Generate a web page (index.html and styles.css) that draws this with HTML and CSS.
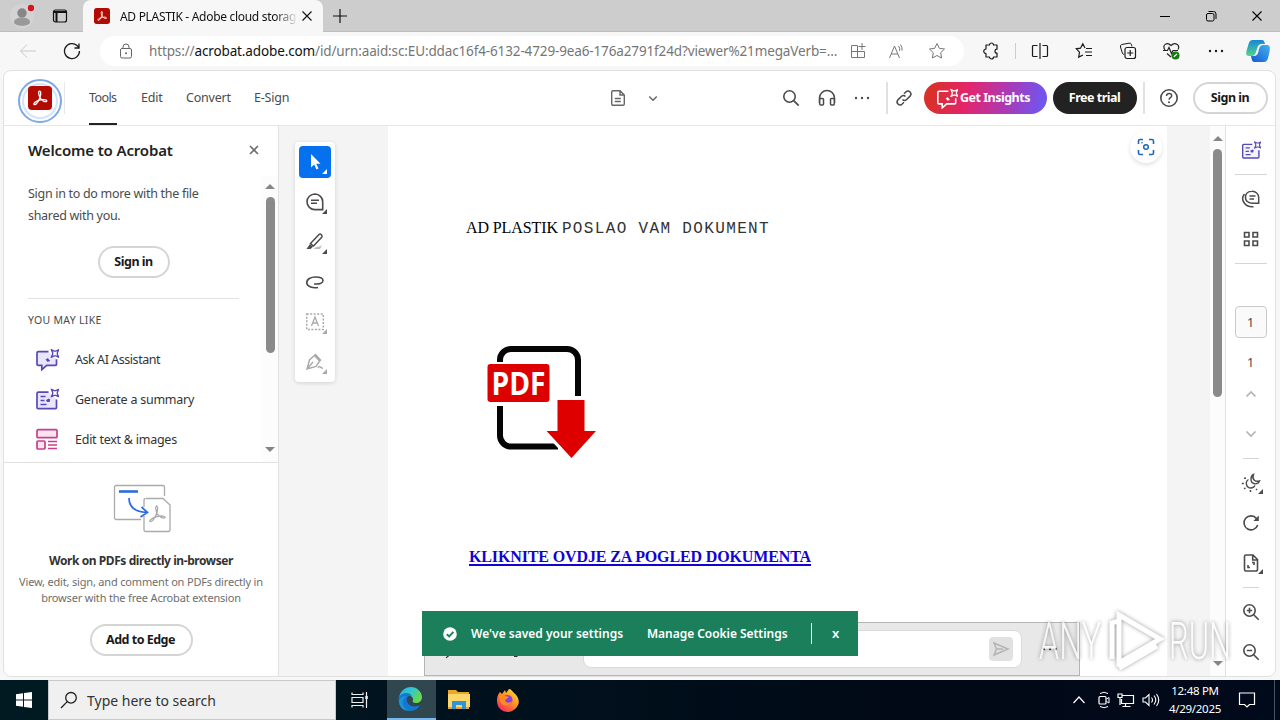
FILE: index.html
```html
<!DOCTYPE html>
<html lang="en">
<head>
  <meta charset="UTF-8" />
  <meta name="viewport" content="width=device-width, initial-scale=1" />
  <title>AD PLASTIK - Adobe cloud storage</title>
  <link rel="stylesheet" href="styles.css">
</head>
<body>

<!-- Shared icons -->
<svg class="defs" width="0" height="0">
  <symbol id="acrobat" viewBox="0 0 24 24">
    <rect width="24" height="24" rx="4" fill="#b30b00"/>
    <path d="M11.300 5.200c1.800-.6 1.700 3.200.8 5.800-.9 2.800-3.400 7.600-5.300 7.600-2 0-.8-2.600 3.200-3.900 2.900-1 8.600-1.700 8.800.1.1 1.700-3.900 1-6.200-2.200C10.900 10.300 10 5.600 11.300 5.200z" fill="none" stroke="#fff" stroke-width="1.3"/>
  </symbol>
  <symbol id="sparkle" viewBox="0 0 10 10">
    <path d="M.8.8L4 2.400h2L9.200.8 7.600 4v2l1.600 3.200L6 7.600H4L.8 9.200 2.400 6V4z" fill="none" stroke="currentColor" stroke-width="1.500"/>
  </symbol>
  <symbol id="ai-chat" viewBox="0 0 24 24">
    <path d="M13.500 4.700H3.200A1.200 1.200 0 0 0 2 5.900v11.300a1.200 1.200 0 0 0 1.200 1.200h3.600v4.300l4.900-4.300h8.600a1.200 1.200 0 0 0 1.200-1.200v-5" fill="var(--fill, none)" stroke="currentColor" stroke-width="1.700"/>
    <path d="M10.500 12.500l2.500-1.500.8 1.600 1.500 1.200-2.500 1.200-1-1z" fill="currentColor"/>
    <use href="#sparkle" x="15.500" y="2" width="9" height="9"/>
  </symbol>
  <symbol id="ai-doc" viewBox="0 0 24 24">
    <path d="M13.500 5.200H3.200A1.200 1.200 0 0 0 2 6.400v14a1.200 1.200 0 0 0 1.200 1.200h17.100a1.200 1.200 0 0 0 1.200-1.200v-8" fill="var(--fill, none)" stroke="currentColor" stroke-width="1.700"/>
    <path d="M5.500 9.500h5M5.500 13.500h4M5.500 17.500h6" stroke="currentColor" stroke-width="1.500"/>
    <path d="M11 13l3-1.500 1.300 1.200L14.500 15 12 15z" fill="currentColor"/>
    <use href="#sparkle" x="15.500" y="1.500" width="9" height="9"/>
  </symbol>
  <symbol id="dots" viewBox="0 0 16 4">
    <circle cx="2" cy="2" r="1.200" fill="currentColor"/><circle cx="8" cy="2" r="1.200" fill="currentColor"/><circle cx="14" cy="2" r="1.200" fill="currentColor"/>
  </symbol>
  <symbol id="cross" viewBox="0 0 12 12"><path d="M1.500 1.500l9 9M10.500 1.500l-9 9" fill="none" stroke="currentColor" stroke-width="1.100"/></symbol>
  <symbol id="corner" viewBox="0 0 5 5"><path d="M5 0v5H0z" fill="currentColor"/></symbol>
  <symbol id="up" viewBox="0 0 12 8"><path d="M1.500 6.500L6 2l4.500 4.500" fill="none" stroke="currentColor" stroke-width="1.700"/></symbol>
  <symbol id="down" viewBox="0 0 12 8"><path d="M1.500 1.500L6 6l4.500-4.500" fill="none" stroke="currentColor" stroke-width="1.700"/></symbol>
  <symbol id="comment" viewBox="0 0 20 20">
    <path d="M10 2a8 7.800 0 1 0 0 15.600h7.700V9.800A7.800 7.800 0 0 0 10 2z" fill="none" stroke="currentColor" stroke-width="1.600"/>
    <path d="M6 8.300h8M6 11.300h6" stroke="currentColor" stroke-width="1.500"/>
  </symbol>
  <symbol id="star" viewBox="0 0 18 18"><path d="M9 1.500l2.300 4.800 5.200.7-3.800 3.700.9 5.300L9 13.500 4.400 16l.9-5.300L1.500 7l5.200-.7z" fill="none" stroke="currentColor" stroke-linejoin="round"/></symbol>
</svg>

<!-- Browser tab strip -->
<div class="tabstrip">
  <div class="profile">
    <svg width="24" height="24" viewBox="0 0 24 24"><circle cx="12" cy="12" r="12" fill="#d3d3d3"/><circle cx="12" cy="9" r="4.700" fill="#878787"/><path d="M4 18c0-6 16-6 16 0 0 5-16 5-16 0z" fill="#999"/><circle cx="21" cy="4" r="3.200" fill="#d8141a"/></svg>
  </div>
  <div class="tab-menu">
    <svg width="16" height="16" viewBox="0 0 16 16"><rect x="1.500" y="2" width="13" height="12" rx="2" fill="none" stroke="#111" stroke-width="1.200"/><path d="M2 4h12M4.500 5v9" stroke="#111" stroke-width="2"/></svg>
  </div>
  <div class="tab">
    <svg width="16" height="16"><use href="#acrobat"/></svg>
    <span class="tab-title">AD PLASTIK - Adobe cloud storag</span>
    <svg class="tab-close" width="12" height="12"><use href="#cross"/></svg>
  </div>
  <div class="new-tab"><svg width="14" height="14" viewBox="0 0 14 14"><path d="M7 0v14M0 7h14" stroke="#111" stroke-width="1.200"/></svg></div>
  <div class="win-buttons">
    <span><svg width="12" height="12" viewBox="0 0 12 12"><path d="M1 6.500h10" stroke="#000"/></svg></span>
    <span><svg width="12" height="12" viewBox="0 0 12 12"><rect x="1.500" y="3.500" width="7.500" height="7.500" rx="1.500" fill="none" stroke="#000"/><path d="M3.500 1.500h5a2.500 2.500 0 0 1 2.500 2.500v5" fill="none" stroke="#000"/></svg></span>
    <span><svg width="12" height="12"><use href="#cross"/></svg></span>
  </div>
</div>

<!-- Address bar -->
<div class="toolbar">
  <div class="nav-btn back"><svg width="18" height="16" viewBox="0 0 18 16"><path d="M17 8H1.500M8 1.500L1.500 8 8 14.500" fill="none" stroke="currentColor"/></svg></div>
  <div class="nav-btn"><svg width="18" height="18" viewBox="0 0 18 18"><path d="M16.500 9A7.500 7.500 0 1 1 14 3.500L16 5.500M16 1.500v4.500h-4.500" fill="none" stroke="currentColor" stroke-width="1.300"/></svg></div>
  <div class="address">
    <svg class="lock" width="14" height="16" viewBox="0 0 14 16"><rect x="1.500" y="5.500" width="11" height="9.500" rx="1.500" fill="none" stroke="#666"/><path d="M4 5V4a3 3 0 0 1 6 0v1" fill="none" stroke="#666"/><circle cx="7" cy="10.200" r="1" fill="#666"/></svg>
    <span class="url">https://<b>acrobat.adobe.com</b>/id/urn:aaid:sc:EU:ddac16f4-6132-4729-9ea6-176a2791f24d?viewer%21megaVerb=…</span>
    <div class="address-icons">
      <svg width="16" height="16" viewBox="0 0 16 16"><path d="M1.500 2.500h6v12h-6zM1.500 8.500h13M7.500 8.500v6h7v-6M12 0v7M8.500 3.500h7" fill="none" stroke="currentColor"/></svg>
      <svg width="18" height="16" viewBox="0 0 18 16"><path d="M1.500 15L6.500 3l5 12M3.200 11h6.600M10.500 3a5 5 0 0 1 1 5M12.500 1.500a8 8 0 0 1 1.500 6" fill="none" stroke="currentColor"/></svg>
      <svg width="18" height="18"><use href="#star"/></svg>
    </div>
  </div>
  <div class="browser-actions">
    <span><svg width="18" height="18" viewBox="0 0 18 18"><path d="M4 3h3.500a2 2 0 1 1 4 0H15v4.200a1.500 1.500 0 0 0 0 4V15h-3.500a2 2 0 1 1-4 0H4v-3.500a2.200 2.200 0 1 1 0-4.500z" fill="none" stroke="currentColor" stroke-width="1.200" stroke-linejoin="round"/></svg></span>
    <i class="divider"></i>
    <span><svg width="18" height="18" viewBox="0 0 18 18"><path d="M6.500 3.500h-4a1 1 0 0 0-1 1v9a1 1 0 0 0 1 1h4M11.500 3.500h4a1 1 0 0 1 1 1v9a1 1 0 0 1-1 1h-4M9 1v16" fill="none" stroke="currentColor" stroke-width="1.200"/></svg></span>
    <span><svg width="18" height="18" viewBox="0 0 18 18"><path d="M10 6L7.800 1.800 5.500 6.200l-4.200.6 3.200 3.300-.8 5L8 13M11 6.500h6M10 10h7M11 13.500h6" fill="none" stroke="currentColor" stroke-width="1.200"/></svg></span>
    <span><svg width="18" height="18" viewBox="0 0 18 18"><path d="M5 12.500l-1.500-1L1.500 5a2 2 0 0 1 1.300-2.500L10 1.200a2 2 0 0 1 2.500 1.500l.4 1.800" fill="none" stroke="currentColor"/><rect x="6" y="5.500" width="10.500" height="11" rx="2" fill="none" stroke="currentColor" stroke-width="1.200"/><path d="M11.200 8v6M8.200 11h6" stroke="currentColor" stroke-width="1.200"/></svg></span>
    <span><svg width="20" height="18" viewBox="0 0 20 18"><path d="M3 8C-.5 3 5-.5 9 3.500c4-4 9.500-.5 7 4M5 11.500L9 15M1 8.500h4.500L7 5.500l2.500 6L11 8.500h5" fill="none" stroke="#222" stroke-width="1.200"/><circle cx="13.500" cy="13.500" r="4" fill="#107c10"/><path d="M11.800 14.700l3.400-2.800" stroke="#fff" stroke-width="1.200"/></svg></span>
    <span><svg width="16" height="4"><use href="#dots"/></svg></span>
    <span class="copilot"><svg width="26" height="24" viewBox="0 0 26 24">
      <defs><linearGradient id="cp1" x1="0" y1="0" x2="0" y2="1"><stop offset="0" stop-color="#1785d8"/><stop offset="1" stop-color="#52d58b"/></linearGradient><linearGradient id="cp2" x1="0" y1="1" x2="1" y2="0"><stop offset="0" stop-color="#1757d5"/><stop offset="1" stop-color="#40b5ee"/></linearGradient></defs>
      <path d="M8 1h9c2 0 2 1 3 4h-3c-4 0-4 2-6 8-1 3-2 4-4 4H4c-4 0-3-4-1-10 1-4 2-6 5-6z" fill="url(#cp1)"/><path d="M19 23h-9c-3 0-3-2-4-6h3c3 0 4-2 5-7 1-3 2-4 4-4h4c4 0 3 5 2 9-1 5-2 8-5 8z" fill="url(#cp2)"/></svg></span>
  </div>
</div>

<!-- Acrobat web app -->
<div class="app">
  <header class="app-header">
    <div class="logo"><svg width="24" height="24"><use href="#acrobat"/></svg><i class="pulse"></i></div>
    <nav class="menu">
      <a class="active">Tools</a><a class="edit">Edit</a><a class="convert">Convert</a><a class="esign">E-Sign</a>
    </nav>
    <div class="doc-switch">
      <svg width="16" height="18" viewBox="0 0 16 18"><path d="M10 1.700H3A1.300 1.300 0 0 0 1.700 3v12A1.300 1.300 0 0 0 3 16.300h10a1.300 1.300 0 0 0 1.300-1.300V6zM10 2v4h4M4.800 9.500h6M4.800 12.500h6" fill="none" stroke="currentColor" stroke-width="1.400"/></svg>
      <svg width="10" height="7"><use href="#down"/></svg>
    </div>
    <div class="header-icons">
      <svg width="18" height="18" viewBox="0 0 18 18"><circle cx="7.500" cy="7.500" r="5.700" fill="none" stroke="currentColor" stroke-width="1.600"/><path d="M11.700 11.700l5 5" stroke="currentColor" stroke-width="1.700"/></svg>
      <svg width="18" height="18" viewBox="0 0 18 18"><path d="M1.500 14V9a7.500 7.500 0 0 1 15 0v5" fill="none" stroke="currentColor" stroke-width="1.600"/><rect x="1.700" y="9.500" width="3.800" height="6.500" rx="1" fill="#fff" stroke="currentColor" stroke-width="1.500"/><rect x="12.500" y="9.500" width="3.800" height="6.500" rx="1" fill="#fff" stroke="currentColor" stroke-width="1.500"/></svg>
      <svg width="16" height="18" viewBox="0 -7 16 18"><use href="#dots" width="16" height="4"/></svg>
    </div>
    <i class="divider"></i>
    <svg class="link" width="18" height="18" viewBox="0 0 18 18"><path d="M7.500 10.500a3 3 0 0 0 4.200 0l3.600-3.600a3 3 0 0 0-4.200-4.200L9 4.800M10.500 7.500a3 3 0 0 0-4.200 0l-3.600 3.600a3 3 0 0 0 4.200 4.200L9 13.200" fill="none" stroke="currentColor" stroke-width="1.500"/></svg>
    <button class="btn insights"><svg width="22" height="22"><use href="#ai-chat"/></svg><span>Get Insights</span></button>
    <button class="btn trial"><span>Free trial</span></button>
    <i class="divider"></i>
    <svg class="help" width="20" height="20" viewBox="0 0 20 20"><circle cx="10" cy="10" r="8.200" fill="none" stroke="currentColor" stroke-width="1.600"/><path d="M7.500 8c0-3.500 5.200-3 5.200-.3 0 1.900-2.600 2-2.600 4" fill="none" stroke="currentColor" stroke-width="1.500"/><circle cx="10" cy="14.300" r="1" fill="currentColor"/></svg>
    <button class="btn outline signin-top"><span>Sign in</span></button>
  </header>

  <div class="app-body">
    <!-- Left panel -->
    <aside class="side">
      <div class="side-title"><h2>Welcome to Acrobat</h2><svg width="10" height="10" viewBox="0 0 10 10"><path d="M1 1l8 8M9 1L1 9" stroke="#6e6e6e" stroke-width="1.600"/></svg></div>
      <div class="side-scroll">
        <div class="side-content">
          <p class="intro">Sign in to do more with the file<br>shared with you.</p>
          <button class="btn outline signin-side"><span>Sign in</span></button>
          <hr>
          <h3>YOU MAY LIKE</h3>
          <ul class="suggestions">
            <li><svg class="violet" width="24" height="24"><use href="#ai-chat"/></svg><span class="ask">Ask AI Assistant</span></li>
            <li><svg class="violet" width="24" height="24"><use href="#ai-doc"/></svg><span>Generate a summary</span></li>
            <li><svg class="pink" width="24" height="24" viewBox="0 0 24 24"><rect x="2" y="2.700" width="20" height="8" rx="1" fill="#fbe3f0" stroke="currentColor" stroke-width="1.700"/><rect x="2" y="14" width="8" height="8" rx="1" fill="#fbe3f0" stroke="currentColor" stroke-width="1.700"/><path d="M13 14.500h9M13 18h9M13 21.500h9" stroke="currentColor" stroke-width="1.700"/></svg><span>Edit text &amp; images</span></li>
          </ul>
        </div>
        <div class="scrollbar"><i class="arrow-up"></i><i class="thumb"></i><i class="arrow-down"></i></div>
      </div>
      <div class="promo">
        <svg width="60" height="50" viewBox="0 0 60 50"><path d="M29 36.500H4A1.500 1.500 0 0 1 2.500 35V4A1.500 1.500 0 0 1 4 2.500h47A1.500 1.500 0 0 1 52.500 4v9M34 15.500h17l7 6.500v25a1.500 1.500 0 0 1-1.500 1.500h-23A1.500 1.500 0 0 1 32 47V33M32 24v-7a1.500 1.500 0 0 1 1.500-1.500" fill="none" stroke="#aaa" stroke-width="1.300"/><path d="M7 8.500h19" stroke="#2c6be0" stroke-width="2.600"/><path d="M17 15c0 9 5 14 18 14.500M29.500 24l6 5.500-7 4.500" fill="none" stroke="#2c6be0" stroke-width="1.700"/><path d="M44.500 23c2 0 1 7-1 10-1.500 3-4 6-5.500 5.500-1-1 3-4 7-5 4-.9 8-.7 8 1-1 2-6-1-8-4-1-3-2-7-.5-7.500z" fill="none" stroke="#aaa" stroke-width="1.300"/></svg>
        <h4>Work on PDFs directly in-browser</h4>
        <p><span>View, edit, sign, and comment on PDFs directly in</span><br><span>browser with the free Acrobat extension</span></p>
        <button class="btn outline add-edge"><span>Add to Edge</span></button>
      </div>
    </aside>

    <!-- Document viewer -->
    <main class="viewer">
      <div class="palette">
        <div class="tool selected"><svg width="20" height="20" viewBox="0 0 20 20"><path d="M6 2v13.500l3.200-3 2.300 5 2-1-2.200-4.800H15.500z" fill="#fff"/></svg><svg class="corner" width="5" height="5"><use href="#corner"/></svg></div>
        <div class="tool"><svg width="20" height="20"><use href="#comment"/></svg><svg class="corner" width="5" height="5"><use href="#corner"/></svg></div>
        <div class="tool"><svg width="20" height="20" viewBox="0 0 20 20"><path d="M5.500 11.500L14 2.600a1.500 1.500 0 0 1 2.200 0l.5.600a1.500 1.500 0 0 1 0 2L8.500 14z" fill="none" stroke="currentColor" stroke-width="1.500"/><path d="M5 12l3 2.700L5.500 17H1.500z" fill="currentColor"/><path d="M9 17c2-3 4-1 8-4l-2 4z" fill="#bbb"/></svg><svg class="corner" width="5" height="5"><use href="#corner"/></svg></div>
        <div class="tool"><svg width="20" height="20" viewBox="0 0 20 20"><path d="M13 15.500c-5 .8-11-.8-11.200-4.500C1.500 7 6 5 10.500 5c4 0 7.500 1.200 7.500 3.600 0 2.300-3.500 3.400-6.500 3.400H9" fill="none" stroke="currentColor" stroke-width="1.600"/></svg></div>
        <div class="tool off"><svg width="20" height="20" viewBox="0 0 20 20"><rect x="1.700" y="2" width="16.600" height="15.500" fill="none" stroke="currentColor" stroke-width="1.500" stroke-dasharray="2 1.500"/><path d="M6.500 14L10 5l3.500 9M7.800 11h4.400" fill="none" stroke="currentColor" stroke-width="1.300"/></svg><svg class="corner" width="5" height="5"><use href="#corner"/></svg></div>
        <div class="tool off"><svg width="20" height="20" viewBox="0 0 20 20"><path d="M2 17L4.500 8 10.500 2.500l5 5.500L11 14.500zM2 17l6-7M9.500 3.500l5 5.500M13 16c2-4 2 1 5 0" fill="none" stroke="currentColor" stroke-width="1.400"/></svg><svg class="corner" width="5" height="5"><use href="#corner"/></svg></div>
      </div>
      <article class="sheet">
        <p class="sent"><span class="company">AD PLASTIK</span> <code>POSLAO VAM DOKUMENT</code></p>
        <svg class="pdf-icon" width="114" height="116" viewBox="0 0 114 116">
          <path d="M14 18V16A11 11 0 0 1 25 5H81A11 11 0 0 1 92 16V52M14 62V91A11 11 0 0 0 25 102.500H72" fill="none" stroke="#050505" stroke-width="6"/>
          <rect x="1.500" y="20" width="62" height="38" rx="3" fill="#de0000"/>
          <text x="5.500" y="50.500" textLength="54" lengthAdjust="spacingAndGlyphs" class="pdf-label">PDF</text>
          <path d="M71.500 56h27v31h11.500L85.500 114 60.500 87h11z" fill="#de0000"/>
          <path d="M57 86l18 19" stroke="#fff" stroke-width="3"/>
        </svg>
        <a class="doc-link">KLIKNITE OVDJE ZA POGLED DOKUMENTA</a>
      </article>
      <div class="capture"><svg width="18" height="18" viewBox="0 0 18 18"><path d="M1.500 6V3A1.500 1.500 0 0 1 3 1.500h3M12 1.500h3A1.500 1.500 0 0 1 16.500 3v3M16.500 12v3a1.500 1.500 0 0 1-1.500 1.500h-3M6 16.500H3A1.500 1.500 0 0 1 1.500 15v-3" fill="none" stroke="#2468b4" stroke-width="1.600"/><circle cx="9" cy="9" r="2.300" fill="none" stroke="#2468b4" stroke-width="1.500"/><circle cx="5" cy="4.800" r=".8" fill="#2468b4"/></svg></div>
    </main>
    <div class="scrollbar page-scroll"><i class="arrow-up"></i><i class="thumb"></i><i class="arrow-down"></i></div>

    <!-- Right rail -->
    <aside class="rail">
      <div class="cell"><svg class="violet plain" width="20" height="20"><use href="#ai-doc"/></svg></div>
      <hr>
      <div class="cell comments"><svg width="20" height="20" viewBox="0 0 20 20"><path d="M11 2.200c-8.500 0-9 12 0 12h6.700V8.500A6.400 6.400 0 0 0 11 2.200zM8.500 6.900h6M8.500 9.900h4.500" fill="none" stroke="currentColor" stroke-width="1.500"/><path d="M3.500 5c-4.500 5 0 13.500 9 12.700" fill="none" stroke="currentColor" stroke-width="1.500"/></svg></div>
      <div class="cell"><svg width="16" height="16" viewBox="0 0 16 16"><path d="M1.500 1.500h4.500V6H1.500zM10 1.500h4.500V6H10zM1.500 10h4.500v4.500H1.500zM10 10h4.500v4.500H10z" fill="none" stroke="currentColor" stroke-width="1.600"/></svg></div>
      <hr>
      <div class="page-box">1</div>
      <div class="page-count">1</div>
      <div class="cell small muted"><svg width="12" height="8"><use href="#up"/></svg></div>
      <div class="cell muted"><svg width="12" height="8"><use href="#down"/></svg></div>
      <hr class="short">
      <div class="cell night"><svg width="20" height="20" viewBox="0 0 20 20"><path d="M12.500 1.500c-2 4.500 1.500 7.800 6 6.500-2 4.500-8.500 3.500-8.500-1.700 0-2.300 1-4.200 2.500-4.800z" fill="none" stroke="currentColor" stroke-width="1.400"/><path d="M7.500 6.500C3.500 9 5.500 15 9.800 15c2 0 3.300-.8 4.200-2.500" fill="none" stroke="currentColor" stroke-width="1.400"/><path d="M3 5.300h2M.8 10.500h2M3.200 16l1.200-1.200M9.500 19v-2M15 16l1 1" stroke="currentColor" stroke-width="1.500"/></svg><svg class="corner" width="5" height="5"><use href="#corner"/></svg></div>
      <div class="cell"><svg width="18" height="18" viewBox="0 0 18 18"><path d="M15.700 11A7 7 0 1 1 14.500 4.500" fill="none" stroke="currentColor" stroke-width="1.600"/><path d="M16.800 1.500V7h-5.500z" fill="currentColor"/></svg></div>
      <div class="cell"><svg width="18" height="20" viewBox="0 0 18 20"><path d="M11 2H4a1.500 1.500 0 0 0-1.500 1.500v13A1.500 1.500 0 0 0 4 18h10a1.500 1.500 0 0 0 1.500-1.500V6.500zM10.700 2v5h5M10 9.500h2V12M8 14.500H6V12" fill="none" stroke="currentColor" stroke-width="1.600"/></svg><svg class="corner" width="5" height="5"><use href="#corner"/></svg></div>
      <hr class="short">
      <div class="cell zoom"><svg width="18" height="18" viewBox="0 0 18 18"><circle cx="7.500" cy="7.500" r="5.700" fill="none" stroke="currentColor" stroke-width="1.600"/><path d="M11.700 11.700l5 5M7.500 4.800v5.400M4.800 7.500h5.400" stroke="currentColor" stroke-width="1.600"/></svg></div>
      <div class="cell"><svg width="18" height="18" viewBox="0 0 18 18"><circle cx="7.500" cy="7.500" r="5.700" fill="none" stroke="currentColor" stroke-width="1.600"/><path d="M11.700 11.700l5 5M4.800 7.500h5.400" stroke="currentColor" stroke-width="1.600"/></svg></div>
    </aside>
  </div>

  <!-- Assistant bar pinned to the bottom of the viewer -->
  <div class="assistant">
    <svg class="marks" width="100" height="4" viewBox="0 0 100 4"><path d="M1 1.800l2.500-1.800M69 .5h3.500" stroke="#333" stroke-width="1.200"/></svg>
    <div class="ask-box"><span class="send"><svg width="18" height="16" viewBox="0 0 18 16"><path d="M2 2l14 6-14 6 2.500-6zM4.500 8H11" fill="none" stroke="#b4b4b4" stroke-width="1.500"/></svg></span></div>
    <svg class="more" width="16" height="4"><use href="#dots"/></svg>
  </div>

  <!-- Cookie toast -->
  <div class="toast">
    <svg width="14" height="14" viewBox="0 0 14 14"><circle cx="7" cy="7" r="6.800" fill="#fff"/><path d="M3.800 7.200L6.200 9.500l4.200-4.600" fill="none" stroke="#1b7f5c" stroke-width="1.900"/></svg>
    <span class="saved">We've saved your settings</span>
    <span class="manage">Manage Cookie Settings</span>
    <i></i>
    <span class="dismiss">x</span>
  </div>
</div>

<svg class="watermark" width="220" height="80" viewBox="-4 -8 220 80">
  <text x="4" y="51" textLength="62" lengthAdjust="spacingAndGlyphs">ANY</text>
  <path class="play" d="M84 7l41 24-41 24zM77 51V15l6-2M84 60l38-22"/>
  <text x="134" y="51" textLength="62" lengthAdjust="spacingAndGlyphs">RUN</text>
</svg>

<!-- Windows taskbar -->
<footer class="taskbar">
  <div class="start"><svg width="16" height="16" viewBox="0 0 16 16"><path d="M0 2.300L7 1.300v6.300H0zM8 1.100L16 0v7.600H8zM0 8.500h7v6.300l-7-1zM8 8.500h8V16l-8-1.100z" fill="#fff"/></svg></div>
  <div class="search"><svg width="18" height="18" viewBox="0 0 18 18"><circle cx="11" cy="6.800" r="5.300" fill="none" stroke="#222" stroke-width="1.300"/><path d="M7.200 10.600L1 17" stroke="#222" stroke-width="1.300"/></svg><span>Type here to search</span></div>
  <div class="task"><svg width="18" height="18" viewBox="0 0 18 18"><path d="M1 1.500v2h11v-2M1 16.500v-2h11v2M1 6.500h11v5H1zM15.500 1v16" fill="none" stroke="#eee" stroke-width="1.200"/><path d="M14.300 5h2.500v3h-2.500z" fill="#eee"/></svg></div>
  <div class="task open"><svg width="24" height="24" viewBox="0 0 24 24">
    <defs><linearGradient id="eg" x1="0" y1="0" x2="1" y2=".5"><stop offset="0" stop-color="#2ab2e8"/><stop offset=".5" stop-color="#31c6d0"/><stop offset="1" stop-color="#68d84c"/></linearGradient></defs>
    <path d="M1 11C2 4 7 0 13 0c6 0 11 5 11 10 0 4-3 6-6 6s-4-1-3-3c1-4-7-8-14-2z" fill="url(#eg)"/><path d="M1 10c3-5 11-5 13-1-4-1-6 2-5 5 1 5 7 7 13 4-3 6-11 8-17 4-4-3-5-8-4-12z" fill="#1378cf"/><path d="M9 9.500c-6 2-6 10 1 14-6 0-9-5-9-10 1-3 4-5 8-4z" fill="#1c94dc"/></svg></div>
  <div class="task"><svg width="24" height="22" viewBox="0 0 24 22"><path d="M1 1h8l2 2h11v17H1z" fill="#e9a72b"/><path d="M1 5h22v13H1z" fill="#ffd768"/><path d="M5 20v-8h14v8h-4v-4H9v4z" fill="#3193d8"/></svg></div>
  <div class="task"><svg width="24" height="24" viewBox="0 0 24 24">
    <defs><linearGradient id="ff" x1="1" y1="0" x2=".2" y2="1"><stop offset="0" stop-color="#fff044"/><stop offset=".45" stop-color="#ff9a1f"/><stop offset="1" stop-color="#f5275e"/></linearGradient></defs>
    <path d="M4 4l2 2 3-4 1 3 3-4c2 0 3 2 5 4 4 3 6 8 4 12-4 9-16 9-20 1C0 13 1 7 4 4z" fill="url(#ff)"/><circle cx="11.500" cy="12" r="5" fill="#8c3fe0"/><path d="M3 8c4-2 7 0 10 1l-4 3c1 4 5 3 7 1-1 6-10 6-12 0z" fill="#ff8a24"/></svg></div>
  <div class="tray">
    <svg width="14" height="10" viewBox="0 0 14 10"><path d="M1.500 8L7 2l5.500 6" fill="none" stroke="#fff" stroke-width="1.200"/></svg>
    <svg width="12" height="18" viewBox="0 0 12 18"><rect x="1" y="5.500" width="7" height="7.500" rx="1" fill="none" stroke="#fff" stroke-width="1.200"/><path d="M8.500 8l2.500-1.500v5.500L8.500 10.500M2 2.500q4-2.500 8 0M2 15.500q4 2.500 8 0" fill="none" stroke="#fff"/></svg>
    <svg width="18" height="16" viewBox="0 0 18 16"><path d="M5 3.500h11.500v8H4.500V7M8.500 12v2.500M5.500 14.500h8M1 2h4v3.500H1zM3 5.500V13" fill="none" stroke="#fff" stroke-width="1.200"/></svg>
    <svg width="18" height="16" viewBox="0 0 18 16"><path d="M1 6h2.500L7 2.500v11L3.500 10H1zM9.500 5.500q2 2.500 0 5M12 3.500q3.500 4.500 0 9M14.500 2q4.500 6 0 12" fill="none" stroke="#fff" stroke-width="1.100"/></svg>
    <div class="clock"><span>12:48 PM</span><span>4/29/2025</span></div>
    <svg class="notif" width="18" height="18" viewBox="0 0 18 18"><path d="M1.500 2h15v11.500h-5L9 16l-2.500-2.500h-5z" fill="none" stroke="#fff" stroke-width="1.200"/></svg>
    <i class="peek"></i>
  </div>
</footer>

</body>
</html>
```
FILE: styles.css
```css
* {
  box-sizing: border-box;
}
body {
  margin: 0;
  width: 1280px;
  height: 720px;
  overflow: hidden;
  position: relative;
  display: flex;
  flex-direction: column;
  background: #f7f7f7;
  font-family: "Noto Sans", "Open Sans", sans-serif;
  font-size: 12.5px;
  color: #333;
}
svg {
  display: block;
  flex: none;
}
.defs {
  position: absolute;
}
span,
a {
  white-space: nowrap;
}

/* Tab strip */
.tabstrip {
  height: 32px;
  flex: none;
  display: flex;
  align-items: center;
  background: #cdcdcd;
  box-shadow: inset 0 -1px 0 #bdbdbd;
}
.profile {
  width: 44px;
  padding-left: 10px;
}
.tab-menu {
  width: 39px;
  padding-left: 8px;
}
.tab {
  width: 240px;
  height: 32px;
  padding: 0 10px 0 11px;
  display: flex;
  align-items: center;
  background: #f7f7f7;
  border-radius: 8px 8px 0 0;
  color: #111;
}
.tab-title {
  width: 176px;
  margin-left: 10px;
  font-size: 12px;
  letter-spacing: -0.3px;
  -webkit-mask-image: linear-gradient(90deg, #000 155px, transparent 178px);
  mask-image: linear-gradient(90deg, #000 155px, transparent 178px);
}
.tab-close {
  margin-left: 5px;
}
.new-tab {
  margin-left: 10px;
}
.win-buttons {
  display: flex;
  margin-left: auto;
  color: #000;
}
.win-buttons span {
  width: 46px;
  display: flex;
  justify-content: center;
}

/* Address bar */
.toolbar {
  height: 38px;
  flex: none;
  display: flex;
  align-items: center;
  color: #1b1b1b;
}
.nav-btn {
  width: 44px;
  flex: none;
  display: flex;
  justify-content: center;
}
.back {
  margin-left: 6px;
  color: #c9c9c9;
}
.address {
  width: 864px;
  flex: none;
  height: 30px;
  margin-left: 6px;
  padding: 0 16px 0 19px;
  display: flex;
  align-items: center;
  background: #fff;
  border-radius: 15px;
  color: #767676;
}
.url {
  width: 701px;
  flex: none;
  margin-left: 16px;
  font-size: 13.5px;
  letter-spacing: -0.13px;
}
.url b {
  font-weight: 400;
  color: #111;
}
.address-icons {
  display: flex;
  align-items: center;
  gap: 22px;
}
.browser-actions {
  flex: none;
  display: flex;
  align-items: center;
  margin-left: 5px;
}
.browser-actions span {
  width: 44px;
  flex: none;
  display: flex;
  justify-content: center;
}
.browser-actions .divider {
  width: 1px;
  height: 16px;
  margin: 0 2px;
  background: #ccc;
}
.browser-actions .copilot {
  width: 39px;
}

/* App frame */
.app {
  width: 1273px;
  height: 607px;
  margin-left: 3px;
  flex: none;
  position: relative;
  display: flex;
  flex-direction: column;
  overflow: hidden;
  background: #fff;
  border: 1px solid #e1e1e1;
  border-radius: 8px;
}
.app-header {
  height: 55px;
  flex: none;
  display: flex;
  align-items: center;
  border-bottom: 1px solid #e6e6e6;
  color: #4b4b4b;
}
.logo {
  width: 61px;
  height: 32px;
  padding: 4px 0 0 24px;
  position: relative;
  border-right: 1px solid #e8e8e8;
}
.pulse {
  position: absolute;
  left: 14px;
  top: -3px;
  width: 44px;
  height: 44px;
  border: 2px solid #7ea8e6;
  border-radius: 50%;
  box-shadow: inset 0 0 0 2px #fff, inset 0 0 0 4px #d3e4fa;
}
.logo svg {
  position: relative;
  z-index: 1;
}
.menu {
  width: 523px;
  height: 54px;
  padding-left: 24px;
  display: flex;
}
.menu a {
  padding-top: 18px;
  height: 54px;
  letter-spacing: -0.2px;
}
.menu .active {
  width: 28px;
  letter-spacing: -0.6px;
  border-bottom: 2px solid #222;
}
.menu .edit {
  width: 45px;
  margin-left: 24px;
}
.menu .convert {
  width: 68px;
}
.doc-switch {
  display: flex;
  align-items: center;
  gap: 22px;
  width: 170px;
  padding-left: 22px;
  color: #666;
}
.header-icons {
  display: flex;
  gap: 18px;
  margin-left: 24px;
}
.app-header .divider {
  width: 2px;
  height: 32px;
  background: #e1e1e1;
}
.header-icons + .divider {
  margin-left: 16px;
}
.link {
  margin: 0 11px 0 7px;
}
.btn {
  height: 32px;
  flex: none;
  padding: 0 1px 2px 0;
  display: flex;
  align-items: center;
  justify-content: center;
  border: none;
  border-radius: 16px;
  font-family: inherit;
  font-size: 12.5px;
  font-weight: 700;
  letter-spacing: -0.5px;
}
.insights {
  width: 123px;
  padding-right: 5px;
  color: #fff;
  background: linear-gradient(100deg, #d9302c 8%, #e3256b 35%, #a83bb8 68%, #7155ee 95%);
}
.insights svg {
  margin: 2px 2px 0 0;
}
.trial {
  width: 84px;
  margin: 0 6px;
  color: #fff;
  background: #222;
}
.help {
  margin: 0 14px;
}
.outline {
  background: #fff;
  border: 2px solid #d5d5d5;
  color: #1a1a1a;
}
.signin-top {
  width: 75px;
}
.app-body {
  flex: 1;
  min-height: 0;
  display: flex;
}

/* Left panel */
.side {
  width: 275px;
  flex: none;
  display: flex;
  flex-direction: column;
  border-right: 1px solid #e1e1e1;
}
.side-title {
  height: 50px;
  padding: 0 19px 2px 24px;
  display: flex;
  align-items: center;
  justify-content: space-between;
}
h2,
h3,
h4,
p {
  margin: 0;
}
h2 {
  font-size: 15px;
  font-weight: 600;
  letter-spacing: -0.15px;
  color: #222;
}
.side-scroll {
  height: 286px;
  display: flex;
  justify-content: space-between;
}
.side-content {
  padding: 7px 0 0 24px;
}
.intro {
  line-height: 22px;
  letter-spacing: -0.3px;
  color: #4b4b4b;
}
.signin-side {
  width: 72px;
  margin: 19px 0 20px 70px;
}
hr {
  height: 1px;
  margin: 0;
  border: none;
  background: #e1e1e1;
}
.side-content hr {
  width: 211px;
}
h3 {
  margin-top: 13px;
  font-size: 10.5px;
  line-height: 16px;
  font-weight: 400;
  letter-spacing: 0.3px;
  color: #4b4b4b;
}
.suggestions {
  list-style: none;
  margin: 11px 0 0 7px;
  padding: 0;
}
.suggestions li {
  height: 40px;
  display: flex;
  align-items: center;
  gap: 16px;
  letter-spacing: -0.25px;
}
.ask {
  letter-spacing: -0.45px;
}
.violet {
  --fill: #e9e6fb;
  color: #5749b5;
}
.violet.plain {
  --fill: #f4f2ff;
}
.pink {
  color: #c8408b;
}
.scrollbar {
  width: 16px;
  display: flex;
  flex-direction: column;
  align-items: center;
  background: #fcfcfc;
}
.arrow-up,
.arrow-down {
  border: 5px solid transparent;
  border-top-width: 0;
  border-bottom: 5px solid #858585;
  margin-top: 8px;
}
.arrow-down {
  border-top: 5px solid #858585;
  border-bottom-width: 0;
  margin: auto 0 10px;
}
.thumb {
  width: 9px;
  height: 156px;
  margin-top: 8px;
  border-radius: 5px;
  background: #8a8a8a;
}
.promo {
  flex: 1;
  padding-top: 20px;
  display: flex;
  flex-direction: column;
  align-items: center;
  border-top: 1px solid #e1e1e1;
  text-align: center;
}
.promo svg {
  margin-left: 1px;
}
h4 {
  margin-top: 19px;
  font-size: 12px;
  line-height: 18px;
  font-weight: 700;
  letter-spacing: -0.43px;
  white-space: nowrap;
}
.promo p {
  margin-top: 4px;
  font-size: 11px;
  line-height: 16px;
  letter-spacing: -0.18px;
  color: #6e6e6e;
}
.add-edge {
  width: 103px;
  margin-top: 18px;
}

/* Viewer */
.viewer {
  width: 931px;
  flex: none;
  position: relative;
  padding-left: 16px;
  display: flex;
  align-items: flex-start;
  background: #f4f4f4;
}
.palette {
  width: 40px;
  height: 240px;
  margin-top: 16px;
  background: #fff;
  border-radius: 4px;
  box-shadow: 0 1px 4px rgba(0, 0, 0, 0.14);
}
.tool {
  width: 32px;
  height: 32px;
  margin: 4px 4px 8px;
  position: relative;
  display: flex;
  align-items: center;
  justify-content: center;
  border-radius: 4px;
  color: #4b4b4b;
}
.selected {
  background: #0671ee;
  color: #fff;
}
.off {
  color: #a9a9a9;
}
.corner {
  position: absolute;
  right: 4px;
  bottom: 4px;
}
.sheet {
  width: 779px;
  height: 550px;
  margin-left: 53px;
  padding: 92px 0 0 78px;
  background: #fff;
}
.sent {
  height: 20px;
  line-height: 20px;
  font-family: "Liberation Serif", serif;
  font-size: 16px;
  color: #000;
}
.company {
  letter-spacing: -0.1px;
}
.sent code {
  font-family: "Liberation Mono", monospace;
  font-size: 16px;
  letter-spacing: 1.35px;
  color: #333;
}
.pdf-icon {
  margin: 106px 0 0 20px;
}
.pdf-label {
  font-family: "Open Sans", sans-serif;
  font-size: 33px;
  font-weight: 700;
  fill: #fff;
}
.doc-link {
  display: inline-block;
  margin: 89px 0 0 3px;
  font: 700 16px/15px "Liberation Serif", serif;
  letter-spacing: -0.13px;
  color: #1203d4;
  border-bottom: 2px solid #1203d4;
}
.capture {
  position: absolute;
  left: 851px;
  top: 5px;
  width: 32px;
  height: 32px;
  display: flex;
  align-items: center;
  justify-content: center;
  background: #fff;
  border-radius: 50%;
  box-shadow: 0 2px 4px rgba(0, 0, 0, 0.12);
}
.page-scroll {
  width: 15px;
  flex: none;
}
.page-scroll .arrow-up {
  margin-top: 10px;
}
.page-scroll .thumb {
  height: 248px;
}

/* Right rail */
.rail {
  flex: 1;
  padding-top: 4px;
  display: flex;
  flex-direction: column;
  align-items: center;
  border-left: 1px solid #e1e1e1;
  color: #4b4b4b;
}
.rail hr {
  width: 32px;
  flex: none;
  margin-top: 4px;
  background: #d5d5d5;
}
.rail .short {
  width: 16px;
}
.cell {
  width: 32px;
  height: 40px;
  flex: none;
  position: relative;
  display: flex;
  align-items: center;
  justify-content: center;
}
.comments {
  margin-top: 4px;
}
.page-box {
  width: 32px;
  height: 32px;
  margin-top: 42px;
  border: 1px solid #cacaca;
  border-radius: 4px;
  background: #fafafa;
  text-align: center;
  line-height: 32px;
}
.page-count {
  height: 48px;
  line-height: 50px;
}
.cell.small {
  height: 16px;
}
.cell.muted {
  color: #b3b3b3;
}
.cell.small + .muted {
  margin-top: 12px;
}
.night {
  margin-top: 4px;
}
.cell .corner {
  right: 4px;
  bottom: 9px;
}
.zoom {
  margin-top: 4px;
}

/* Assistant bar */
.assistant {
  position: absolute;
  left: 420px;
  top: 551px;
  width: 656px;
  height: 54px;
  padding-left: 158px;
  display: flex;
  align-items: center;
  background: #e9e8e8;
  border: 1px solid #b5b5b5;
  color: #444;
}
.marks {
  position: absolute;
  left: 20px;
  top: 33px;
}
.ask-box {
  width: 439px;
  height: 38px;
  padding-right: 8px;
  display: flex;
  align-items: center;
  justify-content: flex-end;
  background: #fff;
  border: 1px solid #dadada;
  border-radius: 8px;
}
.send {
  width: 24px;
  height: 24px;
  display: flex;
  align-items: center;
  justify-content: center;
  background: #e1e1e1;
  border-radius: 4px;
}
.more {
  margin-left: 20px;
}

/* Toast */
.toast {
  position: absolute;
  left: 418px;
  top: 540px;
  width: 436px;
  height: 45px;
  padding-left: 21px;
  display: flex;
  align-items: center;
  background: #1b7f5c;
  color: #fff;
  font-size: 12px;
  font-weight: 600;
}
.saved {
  width: 176px;
  margin-left: 14px;
}
.manage {
  width: 164px;
  letter-spacing: -0.04px;
}
.toast i {
  width: 1px;
  height: 21px;
  margin-right: 20px;
  background: #fff;
}
.dismiss {
  font-size: 13px;
  padding-bottom: 2px;
}

/* Watermark */
.watermark {
  position: absolute;
  left: 1031px;
  top: 600px;
  opacity: 0.65;
  filter: drop-shadow(0 0 2px rgba(0, 0, 0, 0.6));
}
.watermark text {
  font-family: Roboto, sans-serif;
  font-size: 52px;
  font-weight: 300;
  fill: #fff;
}
.play {
  fill: none;
  stroke: #fff;
  stroke-width: 5;
}

/* Taskbar */
.taskbar {
  height: 40px;
  flex: none;
  margin-top: 3px;
  display: flex;
  align-items: center;
  background: linear-gradient(90deg, #011a22, #00101c 45%, #010916 70%, #010a1b);
  color: #fff;
}
.start,
.task {
  width: 49px;
  height: 40px;
  display: flex;
  align-items: center;
  justify-content: center;
}
.start {
  width: 48px;
}
.search {
  width: 288px;
  height: 40px;
  padding-left: 11px;
  display: flex;
  align-items: center;
  gap: 9px;
  background: #f0f0f0;
  border: 1px solid #c8c8c8;
  font-size: 14px;
  color: #333;
}
.search + .task {
  width: 51px;
}
.task svg {
  margin-right: 3px;
}
.open {
  background: #30474f;
  border-bottom: 2px solid #76b9ed;
}
.tray {
  margin-left: auto;
  display: flex;
  align-items: center;
}
.tray svg {
  margin-right: 7px;
}
.tray svg:first-child {
  margin-right: 12px;
}
.clock {
  width: 70px;
  display: flex;
  flex-direction: column;
  align-items: center;
  font-size: 11.5px;
  line-height: 18px;
  letter-spacing: -0.3px;
}
.tray .clock {
  margin-left: -7px;
}
.tray .notif {
  margin: 0 18px 0 8px;
}
.peek {
  width: 1px;
  height: 40px;
  margin-right: 5px;
  background: #4a525d;
}
```
